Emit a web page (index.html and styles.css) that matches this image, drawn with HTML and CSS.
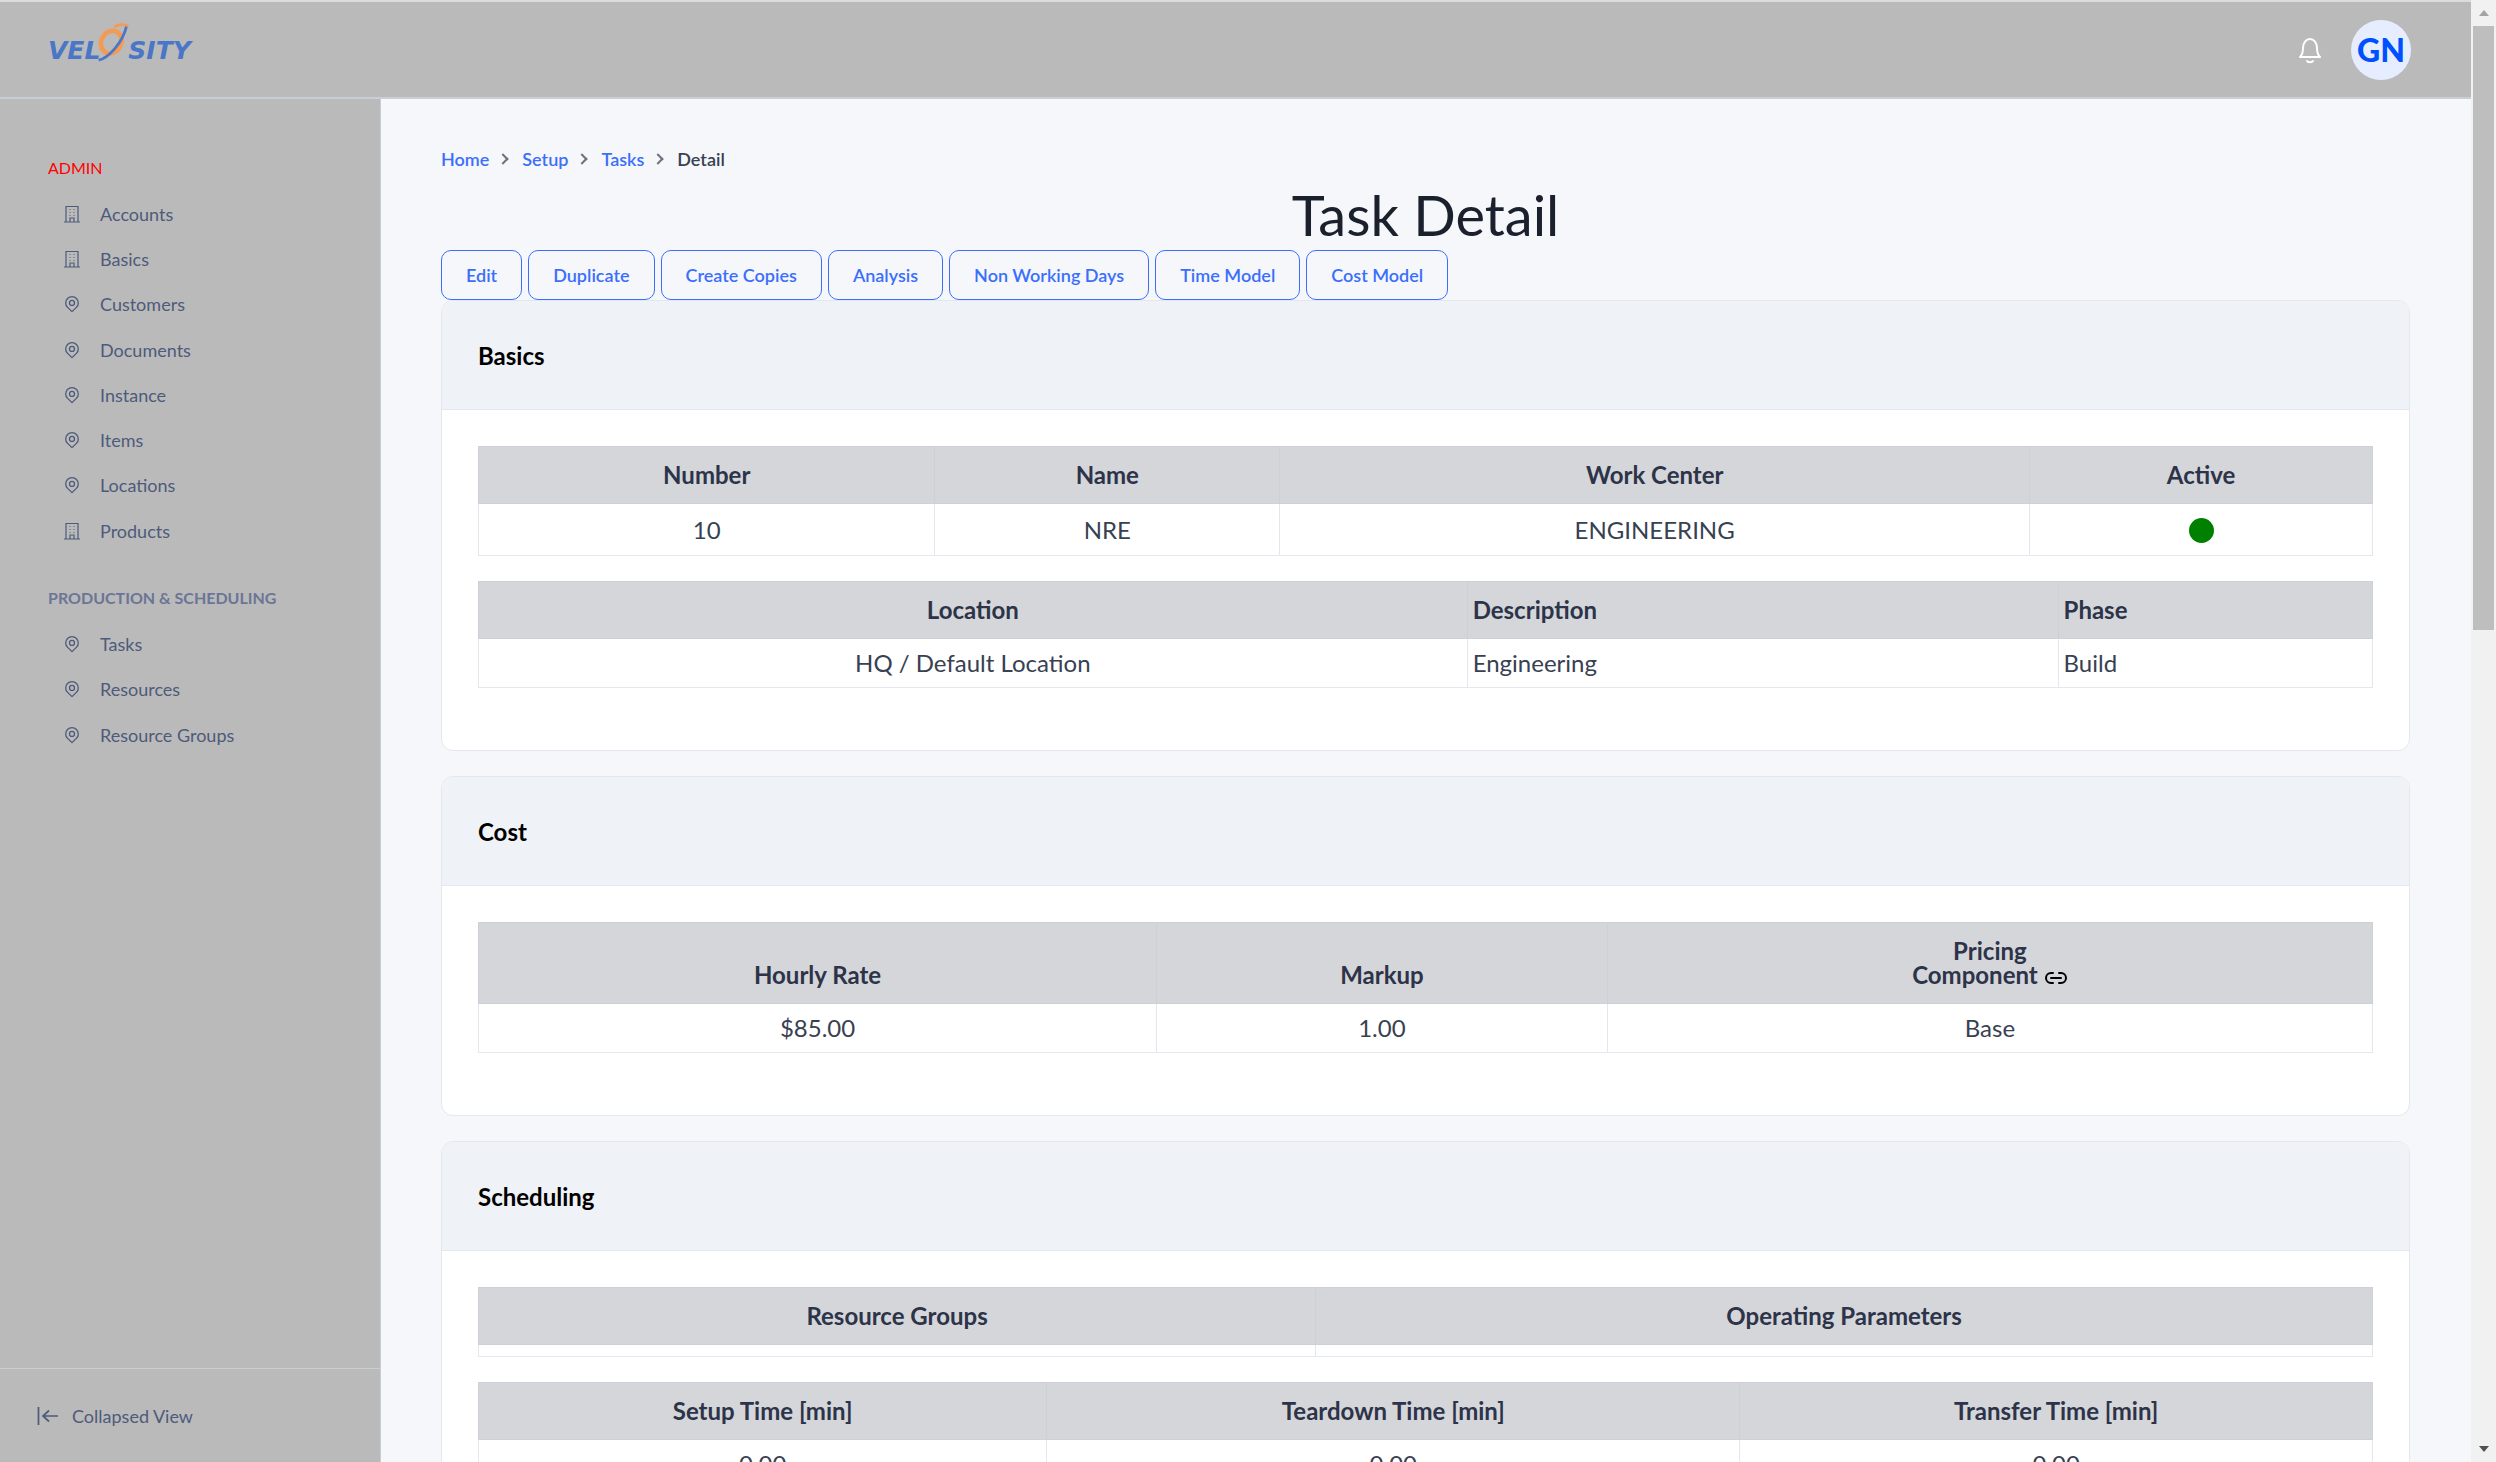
FILE: index.html
```html
<!DOCTYPE html>
<html lang="en">
<head>
  <meta charset="UTF-8">
  <meta name="viewport" content="width=device-width, initial-scale=1.0">
  <title>Task Detail</title>
  <link rel="stylesheet" href="styles.css">
</head>
<body>

<svg class="icon-defs" width="0" height="0">
  <symbol id="i-building" viewBox="0 0 18 18">
    <path d="M1 17h16M3 17V1.5h12V17M7 17v-4h4v4M6.5 4.5h1M10.5 4.5h1M6.5 7.5h1M10.5 7.5h1M6.5 10.5h1M10.5 10.5h1" fill="none" stroke="currentColor" stroke-width="1.2"/>
  </symbol>
  <symbol id="i-pin" viewBox="0 0 18 18">
    <path d="M9 16.6 4.6 12.4a6.3 6.3 0 1 1 8.8 0z" fill="none" stroke="currentColor" stroke-width="1.3" stroke-linejoin="round"/>
    <circle cx="9" cy="7.9" r="2.5" fill="none" stroke="currentColor" stroke-width="1.3"/>
  </symbol>
</svg>

<div class="app">
  <div class="page">
    <header class="topbar">
      <div class="logo"><span>VEL</span><svg class="logo-o" viewBox="0 0 40 46" width="36" height="42"><ellipse cx="17" cy="22" rx="11" ry="13" transform="rotate(30 17 22)" fill="none" stroke="#f59a52" stroke-width="5"/><path d="M3 42C14 40 30 22 34 4" fill="none" stroke="#4a76c8" stroke-width="3"/><path d="M20 5C26 2 32 2 36 4" fill="none" stroke="#f59a52" stroke-width="3"/></svg><span>SITY</span></div>
      <div class="topbar-right">
        <svg class="bell" viewBox="0 0 28 30" width="28" height="30"><path d="M4 22c2-2 3-4 3-9 0-5 3-9 7-9s7 4 7 9c0 5 1 7 3 9z" fill="none" stroke="#fff" stroke-width="2" stroke-linejoin="round"/><path d="M11 26c1 1.600 5 1.600 6 0" fill="none" stroke="#fff" stroke-width="2" stroke-linecap="round"/></svg>
        <div class="avatar">GN</div>
      </div>
    </header>

    <div class="below">
      <aside class="sidebar">
        <nav class="side-nav">
          <div class="side-head side-head-red">ADMIN</div>
          <a class="side-link"><svg class="side-icon"><use href="#i-building"/></svg>Accounts</a>
          <a class="side-link"><svg class="side-icon"><use href="#i-building"/></svg>Basics</a>
          <a class="side-link"><svg class="side-icon"><use href="#i-pin"/></svg>Customers</a>
          <a class="side-link"><svg class="side-icon"><use href="#i-pin"/></svg>Documents</a>
          <a class="side-link"><svg class="side-icon"><use href="#i-pin"/></svg>Instance</a>
          <a class="side-link"><svg class="side-icon"><use href="#i-pin"/></svg>Items</a>
          <a class="side-link"><svg class="side-icon"><use href="#i-pin"/></svg>Locations</a>
          <a class="side-link"><svg class="side-icon"><use href="#i-building"/></svg>Products</a>

          <div class="side-head side-head-second">PRODUCTION &amp; SCHEDULING</div>
          <a class="side-link"><svg class="side-icon"><use href="#i-pin"/></svg>Tasks</a>
          <a class="side-link"><svg class="side-icon"><use href="#i-pin"/></svg>Resources</a>
          <a class="side-link"><svg class="side-icon"><use href="#i-pin"/></svg>Resource Groups</a>
        </nav>
        <div class="side-foot">
          <svg viewBox="0 0 22 20" width="22" height="20"><path d="M1.500 1v18M21 10H6M12 4.500 6 10l6 5.500" fill="none" stroke="currentColor" stroke-width="1.700"/></svg>
          Collapsed View
        </div>
      </aside>

      <main class="main">
        <div class="crumbs">
          <a>Home</a><span class="chev"></span><a>Setup</a><span class="chev"></span><a>Tasks</a><span class="chev"></span><span class="crumb-here">Detail</span>
        </div>
        <h1>Task Detail</h1>
        <div class="btn-row">
          <button class="btn btn-edit">Edit</button>
          <button class="btn">Duplicate</button>
          <button class="btn">Create Copies</button>
          <button class="btn">Analysis</button>
          <button class="btn">Non Working Days</button>
          <button class="btn">Time Model</button>
          <button class="btn">Cost Model</button>
        </div>

        <section class="card">
          <h3 class="card-head">Basics</h3>
          <div class="card-body">
            <table class="t-basics">
              <thead><tr><th>Number</th><th>Name</th><th>Work Center</th><th>Active</th></tr></thead>
              <tbody><tr><td>10</td><td>NRE</td><td>ENGINEERING</td><td><span class="dot"></span></td></tr></tbody>
            </table>
            <table class="t-location">
              <thead><tr><th>Location</th><th class="left">Description</th><th class="left">Phase</th></tr></thead>
              <tbody><tr><td>HQ / Default Location</td><td class="left">Engineering</td><td class="left">Build</td></tr></tbody>
            </table>
          </div>
        </section>

        <section class="card">
          <h3 class="card-head">Cost</h3>
          <div class="card-body">
            <table class="t-cost">
              <thead><tr><th>Hourly Rate</th><th>Markup</th><th>Pricing<br>Component <svg class="link-icon" viewBox="0 0 24 14" width="24" height="14"><path d="M9 2H7a5 5 0 0 0 0 10h2M15 2h2a5 5 0 0 1 0 10h-2M7 7h10" fill="none" stroke="#000" stroke-width="2" stroke-linecap="round"/></svg></th></tr></thead>
              <tbody><tr><td>$85.00</td><td>1.00</td><td>Base</td></tr></tbody>
            </table>
          </div>
        </section>

        <section class="card">
          <h3 class="card-head">Scheduling</h3>
          <div class="card-body">
            <table class="t-groups">
              <thead><tr><th>Resource Groups</th><th>Operating Parameters</th></tr></thead>
              <tbody><tr><td class="empty"></td><td class="empty"></td></tr></tbody>
            </table>
            <table class="t-times">
              <thead><tr><th>Setup Time [min]</th><th>Teardown Time [min]</th><th>Transfer Time [min]</th></tr></thead>
              <tbody><tr><td>0.00</td><td>0.00</td><td>0.00</td></tr></tbody>
            </table>
          </div>
        </section>
      </main>
    </div>
  </div>

  <div class="scrollbar">
    <div class="sb-arrow sb-up"></div>
    <div class="sb-track"><div class="sb-thumb"></div></div>
    <div class="sb-arrow sb-down"></div>
  </div>
</div>

</body>
</html>
```

FILE: styles.css
```css
* {
  box-sizing: border-box;
}

html, body {
  margin: 0;
  height: 100%;
  overflow: hidden;
}

body {
  font-family: Lato, 'Open Sans', sans-serif;
  font-size: 24px;
  color: #374151;
  background-color: #f5f7fb;
}

.icon-defs {
  display: none;
}

.app {
  display: flex;
  height: 1462px;
}

.page {
  flex: 1;
  min-width: 0;
  display: flex;
  flex-direction: column;
}

.topbar {
  flex: none;
  height: 99px;
  background-color: #bababa;
  border-top: 2px solid #dcdcdc;
  border-bottom: 2px solid #c9cdd6;
  display: flex;
  justify-content: space-between;
  align-items: center;
  padding: 0 60px 0 48px;
}

.logo {
  display: flex;
  align-items: flex-end;
  font-family: 'DejaVu Sans', sans-serif;
  font-weight: bold;
  font-style: italic;
  font-size: 25px;
  line-height: 30px;
  color: #4a76c8;
  padding-top: 2px;
}

.logo-o {
  margin: -14px -4px 2px -4px;
}

.topbar-right {
  display: flex;
  align-items: center;
  gap: 27px;
}

.bell {
  display: block;
}

.avatar {
  width: 60px;
  height: 60px;
  border-radius: 50%;
  background-color: #e5edff;
  color: #0050ff;
  font-weight: 900;
  font-size: 32px;
  display: flex;
  align-items: center;
  justify-content: center;
}

.below {
  flex: 1;
  min-height: 0;
  display: flex;
}

.sidebar {
  flex: none;
  width: 381px;
  background-color: #bababa;
  border-right: 1px solid #c9cdd6;
  display: flex;
  flex-direction: column;
  justify-content: space-between;
}

.side-nav {
  padding: 54px 0 0 48px;
}

.side-head {
  font-size: 16px;
  line-height: 30px;
  color: #6b7596;
  font-weight: 700;
}

.side-head-red {
  color: #ff0000;
  font-weight: 400;
  margin-bottom: 8px;
}

.side-head-second {
  margin-top: 30px;
  margin-bottom: 8px;
}

.side-link {
  display: flex;
  align-items: center;
  height: 45.300px;
  padding-left: 15px;
  font-size: 18px;
  color: #4e5a7a;
}

.side-icon {
  width: 18px;
  height: 18px;
  margin-right: 19px;
  color: #4e5a7a;
}

.side-foot {
  height: 94px;
  border-top: 1px solid #c9cdd6;
  padding-left: 37px;
  display: flex;
  align-items: center;
  gap: 13px;
  font-size: 18px;
  color: #4e5a7a;
}

.main {
  flex: 1;
  min-width: 0;
  padding: 47px 61px 0 60px;
  overflow: hidden;
}

.crumbs {
  display: flex;
  align-items: center;
  height: 26px;
  font-size: 18px;
  font-weight: 600;
  color: #3b6ffb;
}

.chev {
  width: 8px;
  height: 8px;
  margin: 0 15px 0 10px;
  border-top: 2px solid #6b7280;
  border-right: 2px solid #6b7280;
  transform: rotate(45deg);
}

.crumb-here {
  color: #374151;
}

h1 {
  margin: 0;
  height: 66px;
  padding-top: 8px;
  font-size: 56px;
  line-height: 70px;
  font-weight: 400;
  text-align: center;
  color: #1a202c;
}

.btn-row {
  display: flex;
  gap: 6px;
  margin-top: 12px;
}

.btn {
  height: 50px;
  padding: 0 24px;
  font-family: inherit;
  font-size: 18px;
  font-weight: 600;
  color: #3b6ffb;
  background-color: transparent;
  border: 1.500px solid #3b6ffb;
  border-radius: 10px;
}

.card {
  background-color: #fff;
  border: 1px solid #e4e7ed;
  border-radius: 12px;
  margin-bottom: 25px;
  overflow: hidden;
}

.card-head {
  margin: 0;
  height: 109px;
  padding: 0 36px;
  display: flex;
  align-items: center;
  background-color: #eff2f6;
  border-bottom: 1px solid #e4e7ed;
  font-size: 24px;
  font-weight: 700;
  color: #000;
}

.card-body {
  padding: 36px 36px 37px;
}

table {
  width: 100%;
  table-layout: fixed;
  border-collapse: collapse;
  margin-bottom: 25px;
}

th {
  background-color: #d4d6da;
  border: 1px solid #ccd0d8;
  padding: 16px 5px;
  line-height: 24px;
  font-weight: 700;
  text-align: center;
  vertical-align: bottom;
  color: #2d3348;
}

td {
  border: 1px solid #e4e7ed;
  padding: 12px 5px;
  line-height: 24px;
  text-align: center;
  color: #374151;
}

th.left, td.left {
  text-align: left;
}

td.empty {
  height: 12px;
  padding: 0;
}

.dot {
  display: inline-block;
  width: 25px;
  height: 25px;
  border-radius: 50%;
  background-color: #008000;
  vertical-align: middle;
}

.link-icon {
  vertical-align: -1px;
}

.t-basics th:nth-child(1) { width: 24.100%; }
.t-basics th:nth-child(2) { width: 18.200%; }
.t-basics th:nth-child(3) { width: 39.600%; }

.t-location th:nth-child(1) { width: 52.200%; }
.t-location th:nth-child(2) { width: 31.200%; }

.t-cost th:nth-child(1) { width: 35.800%; }
.t-cost th:nth-child(2) { width: 23.800%; }

.t-groups th:nth-child(1) { width: 44.200%; }

.t-times th:nth-child(1) { width: 30%; }
.t-times th:nth-child(2) { width: 36.600%; }

.scrollbar {
  flex: none;
  width: 25px;
  display: flex;
  flex-direction: column;
  background-color: #f1f1f1;
}

.sb-arrow {
  flex: none;
  height: 26px;
  display: flex;
  align-items: center;
  justify-content: center;
}

.sb-up::before, .sb-down::before {
  content: "";
  border-left: 5px solid transparent;
  border-right: 5px solid transparent;
}

.sb-up::before {
  border-bottom: 6px solid #a3a3a3;
}

.sb-down::before {
  border-top: 6px solid #505050;
}

.sb-track {
  flex: 1;
  padding: 0 2px;
}

.sb-thumb {
  height: 604px;
  background-color: #bebebe;
}
```
